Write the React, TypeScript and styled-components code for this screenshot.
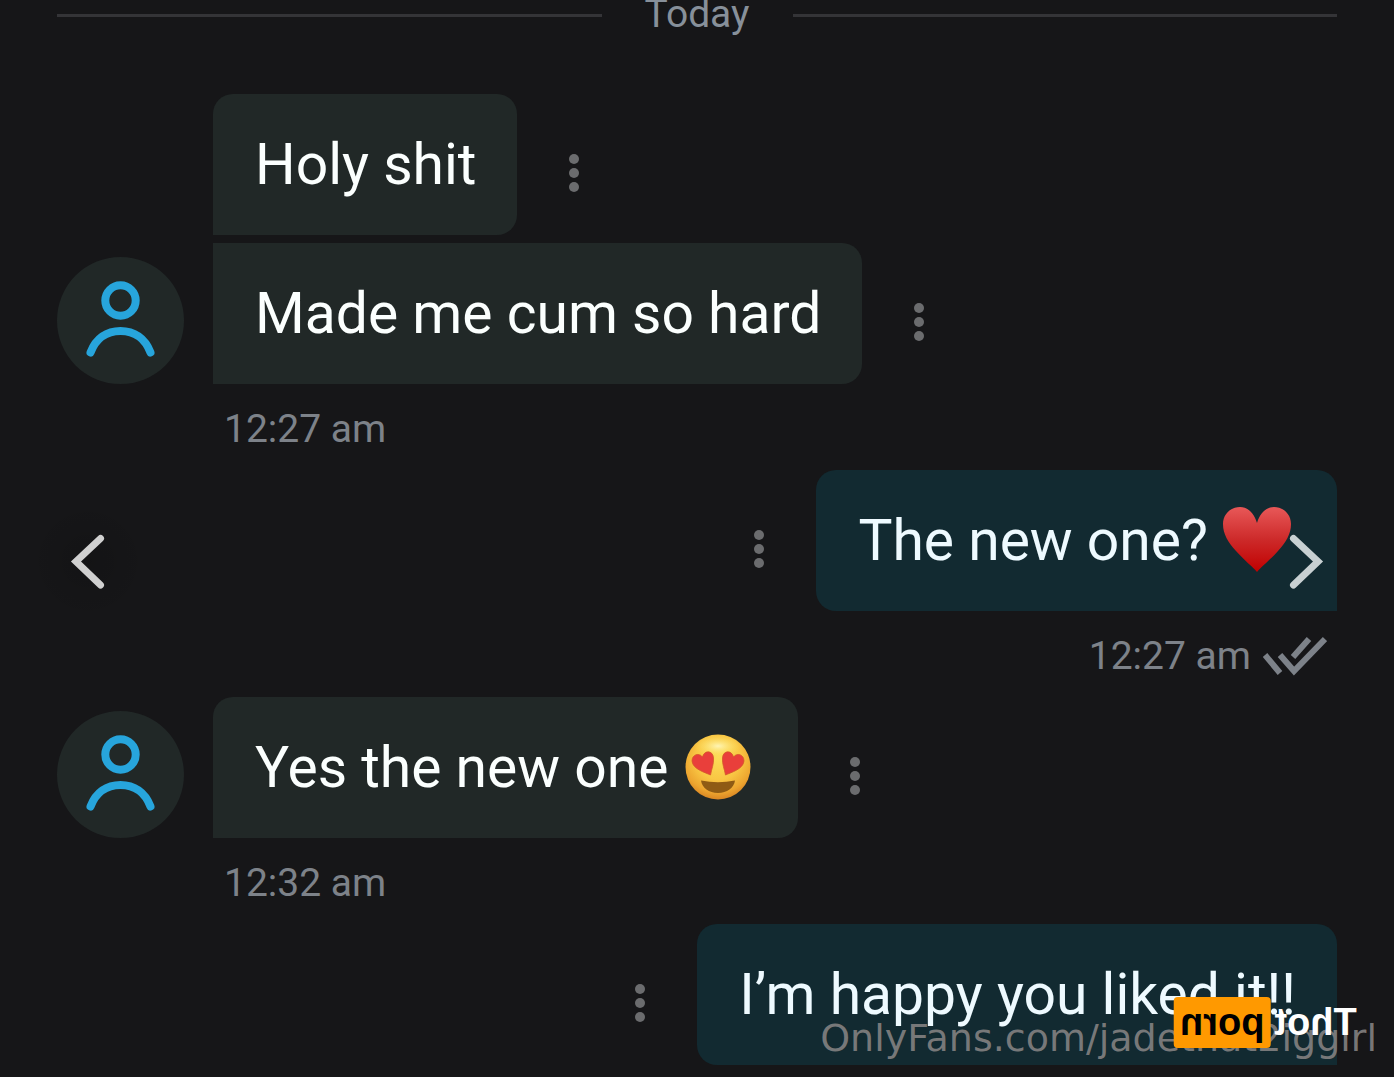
import React from "react";
import styled, { createGlobalStyle } from "styled-components";

const GlobalStyle = createGlobalStyle`
  * { box-sizing: border-box; }
  html, body { margin: 0; background: #161618; overflow: hidden; }
  body { font-family: Roboto, "Liberation Sans", sans-serif; }
  button { border: 0; padding: 0; background: none; cursor: pointer; }
`;

const Viewer = styled.main`
  position: relative;
  height: 100vh;
  overflow: hidden;
  background: #161618;
`;

const Thread = styled.section`
  display: flex;
  flex-direction: column;
  padding: 0 57px;
`;

const DayDivider = styled.div`
  display: flex;
  align-items: center;
  gap: 43px;
  height: 30px;
  margin-bottom: 64px;
  color: #87909a;
  font-size: 39px;
  &::before, &::after {
    content: "";
    flex: 1;
    height: 3px;
    background: #343437;
  }
`;

const DayLabel = styled.span`
  align-self: flex-start;
  line-height: 28px;
`;

const Group = styled.article<{ $own?: boolean }>`
  display: flex;
  flex-direction: column;
  gap: 8px;
  align-items: ${(p) => (p.$own ? "flex-end" : "stretch")};
`;

const Row = styled.div<{ $own?: boolean }>`
  display: flex;
  align-items: flex-end;
  flex-direction: ${(p) => (p.$own ? "row-reverse" : "row")};
`;

const AvatarSlot = styled.div`
  width: 156px;
  flex: none;
`;

const Avatar = styled.svg`
  display: block;
  width: 127px;
  height: 127px;
`;

const Bubble = styled.p<{ $own?: boolean; $joined?: boolean }>`
  display: flex;
  align-items: center;
  gap: 14px;
  margin: 0;
  padding: 41px 41px 40px 42px;
  line-height: 60px;
  font-size: 57px;
  white-space: nowrap;
  color: ${(p) => (p.$own ? "#eefaff" : "#fbfffe")};
  background: ${(p) => (p.$own ? "#122a31" : "#212827")};
  border-radius: ${(p) =>
    p.$own ? "20px 20px 0 20px" : p.$joined ? "0 20px 20px 0" : "20px 20px 20px 0"};
`;

const Emoji = styled.svg`
  width: 70px;
  height: 70px;
  margin: -5px 4px -5px 0;
  flex: none;
`;

const MenuButton = styled.button`
  display: flex;
  flex-direction: column;
  align-items: center;
  gap: 4px;
  width: 30px;
  margin: 0 42px 43px;
`;

const Dot = styled.i`
  width: 10px;
  height: 10px;
  border-radius: 50%;
  background: #6b6c6e;
`;

const Meta = styled.footer<{ $own?: boolean }>`
  display: flex;
  align-items: center;
  justify-content: ${(p) => (p.$own ? "flex-end" : "flex-start")};
  gap: 12px;
  height: 86px;
  padding: ${(p) => (p.$own ? "4px 10px 0 0" : "4px 0 0 167px")};
  font-size: 39px;
  color: #7d8289;
`;

const Ticks = styled.svg`
  width: 64px;
  height: 40px;
`;

const NavButton = styled.button<{ $side: "left" | "right" }>`
  position: absolute;
  top: 501px;
  ${(p) => p.$side}: 28px;
  width: 120px;
  height: 120px;
  border-radius: 50%;
  background: ${(p) =>
    p.$side === "left" ? "radial-gradient(closest-side, rgba(0, 0, 0, 0.12), transparent)" : "none"};
  svg { display: block; width: 120px; height: 120px; }
`;

const Credit = styled.a`
  position: absolute;
  right: 17px;
  bottom: 17px;
  font: 38px/44px "DejaVu Sans", sans-serif;
  color: rgba(134, 132, 132, 0.88);
  text-decoration: none;
`;

const Brand = styled.div`
  position: absolute;
  right: 37px;
  bottom: 29px;
  display: flex;
  align-items: center;
  gap: 4px;
  transform: scaleX(-1);
  font: bold 38px/51px "Liberation Sans", sans-serif;
  color: #fff;
`;

const BrandTag = styled.span`
  padding: 0 6px;
  border-radius: 4px;
  background: #ff9900;
  color: #000;
`;

const UserAvatar = () => (
  <Avatar viewBox="0 0 127 127" role="img" aria-label="User">
    <circle cx="63.5" cy="63.5" r="63.5" fill="#212827" />
    <g fill="none" stroke="#27a5dc" strokeWidth="8" strokeLinecap="round">
      <circle cx="63.5" cy="43.5" r="15.2" />
      <path d="M33.5 95.500C39 81 50 74 63.5 74S88 81 93.500 95.500" />
    </g>
  </Avatar>
);

const Heart = () => (
  <Emoji viewBox="0 0 70 70" role="img" aria-label="Red heart">
    <defs>
      <linearGradient id="heart" x1="0" y1="0" x2="0" y2="1">
        <stop offset="0" stopColor="#e85858" />
        <stop offset="0.5" stopColor="#cd2a2a" />
        <stop offset="1" stopColor="#c00000" />
      </linearGradient>
    </defs>
    <path d="M35 66C31 61 23 55 14 45C6 36 1 28 1 18C1 8 9 1 18 1C26 1 32 7 35 17C38 7 44 1 52 1C61 1 69 8 69 18C69 28 64 36 56 45C47 55 39 61 35 66Z" fill="url(#heart)" />
  </Emoji>
);

const HeartEyes = () => (
  <Emoji viewBox="0 0 70 70" role="img" aria-label="Heart eyes">
    <defs>
      <radialGradient id="face" cx="0.5" cy="0.35" r="0.68">
        <stop offset="0" stopColor="#fcdc58" />
        <stop offset="0.5" stopColor="#f9c744" />
        <stop offset="0.8" stopColor="#eda52f" />
        <stop offset="1" stopColor="#d47d20" />
      </radialGradient>
      <radialGradient id="shine">
        <stop offset="0" stopColor="#fff8c0" stopOpacity="0.9" />
        <stop offset="1" stopColor="#ffe55c" stopOpacity="0" />
      </radialGradient>
    </defs>
    <circle cx="35" cy="34" r="32.500" fill="url(#face)" />
    <ellipse cx="35" cy="13" rx="24" ry="11" fill="url(#shine)" />
    <g fill="#e93f3b" stroke="#d4582a" strokeWidth="0.8">
      <path d="M27.500 42C22 39.500 9.500 36 9 28C9 21 16.500 19.500 19.500 24C21 17 30 17 30.500 25C31 31 28.500 36 27.500 42Z" />
      <path d="M42.500 42C48 39.500 60.500 36 61 28C61 21 53.500 19.500 50.500 24C49 17 40 17 39.500 25C39 31 41.500 36 42.500 42Z" />
    </g>
    <path d="M18 47.500Q35 51 52 47.500C51 55 44 60 35 60S19 55 18 47.500Z" fill="#8f5b14" />
  </Emoji>
);

const Menu = () => (
  <MenuButton type="button" aria-label="Message options">
    <Dot /><Dot /><Dot />
  </MenuButton>
);

interface Message { text: string; emoji?: React.ReactNode; }
interface MessageGroup { own?: boolean; time?: string; messages: Message[]; }

const groups: MessageGroup[] = [
  { time: "12:27 am", messages: [{ text: "Holy shit" }, { text: "Made me cum so hard" }] },
  { own: true, time: "12:27 am", messages: [{ text: "The new one?", emoji: <Heart /> }] },
  { time: "12:32 am", messages: [{ text: "Yes the new one", emoji: <HeartEyes /> }] },
  { own: true, messages: [{ text: "I’m happy you liked it!!" }] },
];

export default function App() {
  return (
    <Viewer>
      <GlobalStyle />
      <Thread>
        <DayDivider><DayLabel>Today</DayLabel></DayDivider>
        {groups.map((group, g) => (
          <React.Fragment key={g}>
            <Group $own={group.own}>
              {group.messages.map((message, m) => (
                <Row key={m} $own={group.own}>
                  {!group.own && (
                    <AvatarSlot>{m === group.messages.length - 1 && <UserAvatar />}</AvatarSlot>
                  )}
                  <Bubble $own={group.own} $joined={m > 0}>
                    {message.text}
                    {message.emoji}
                  </Bubble>
                  <Menu />
                </Row>
              ))}
            </Group>
            {group.time && (
              <Meta $own={group.own}>
                <time>{group.time}</time>
                {group.own && (
                  <Ticks viewBox="0 0 64 40" role="img" aria-label="Read">
                    <path d="M2 19L17 37M17 19L31 35L62 3M30 21L46 3" fill="none" stroke="#7d8289" strokeWidth="6" />
                  </Ticks>
                )}
              </Meta>
            )}
          </React.Fragment>
        ))}
      </Thread>
      <NavButton type="button" $side="left" aria-label="Previous">
        <svg viewBox="0 0 120 120"><path d="M72.500 37.500L48 60.500L72.500 84" fill="none" stroke="#d0d0d0" strokeWidth="7" strokeLinecap="round" /></svg>
      </NavButton>
      <NavButton type="button" $side="right" aria-label="Next">
        <svg viewBox="0 0 120 120"><path d="M47.500 37.500L72 60.500L47.500 84" fill="none" stroke="#c8d0d2" strokeWidth="7" strokeLinecap="round" /></svg>
      </NavButton>
      <Credit href="#">OnlyFans.com/jadethat2iggirl</Credit>
      <Brand>Thot<BrandTag>porn</BrandTag></Brand>
    </Viewer>
  );
}
